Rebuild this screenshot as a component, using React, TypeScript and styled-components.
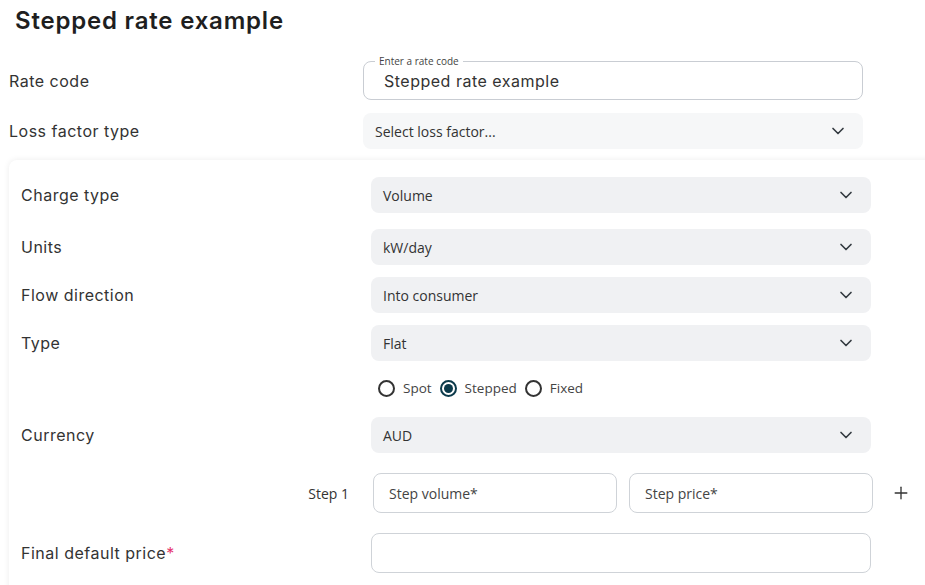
import React from 'react';
import styled, { createGlobalStyle } from 'styled-components';
import { ChevronDown, Plus } from 'lucide-react';

const GlobalStyle = createGlobalStyle`
  html, body {
    margin: 0;
    padding: 0;
    background: #ffffff;
    overflow: hidden;
  }
  body {
    font-family: Inter, 'Liberation Sans', sans-serif;
    color: #2b2b2b;
  }
  * {
    box-sizing: border-box;
  }
`;

const Page = styled.div`
  padding: 6px 0 0 9px;
  width: 925px;
`;

const Heading = styled.h2`
  margin: 0 0 0 6px;
  font-size: 24px;
  line-height: 30px;
  font-weight: 600;
  color: #1f1f1f;
  letter-spacing: 0.8px;
`;

const Row = styled.div<{ $mt?: number; $labelWidth?: number }>`
  display: grid;
  grid-template-columns: ${(p) => p.$labelWidth ?? 354}px 500px;
  align-items: center;
  margin-top: ${(p) => p.$mt ?? 0}px;
`;

const Label = styled.div`
  font-size: 16px;
  line-height: 24px;
  color: #333;
  letter-spacing: 0.5px;
`;

const Required = styled.span`
  color: #e5336d;
`;

const Outlined = styled.div`
  position: relative;
  height: 39px;
  border: 1px solid #c9cdd3;
  border-radius: 8px;
  display: flex;
  align-items: center;
  padding: 0 20px;
`;

const FloatLabel = styled.span`
  position: absolute;
  top: -7px;
  left: 11px;
  padding: 0 4px;
  background: #ffffff;
  font-family: 'Open Sans', sans-serif;
  font-size: 10px;
  line-height: 12px;
  color: #444;
`;

const Value = styled.span`
  font-size: 16px;
  color: #333;
  letter-spacing: 0.5px;
`;

const Select = styled.div<{ $light?: boolean }>`
  height: 36px;
  border-radius: 8px;
  background: ${(p) => (p.$light ? '#f6f7f8' : '#f0f1f3')};
  display: flex;
  align-items: center;
  justify-content: space-between;
  padding: 0 15px 0 12px;
  font-family: 'Open Sans', sans-serif;
  font-size: 14px;
  color: #333;
  svg {
    color: #333a40;
  }
`;

const Card = styled.div`
  margin-top: 11px;
  margin-right: -30px;
  padding: 17px 12px 20px 12px;
  border-radius: 8px 0 0 0;
  background: #ffffff;
  box-shadow: 0 0 6px rgba(0, 0, 0, 0.08);
`;

const RadioGroup = styled.div`
  display: flex;
  align-items: center;
  gap: 8px;
  padding-left: 7px;
  height: 24px;
`;

const RadioCircle = styled.span<{ $checked?: boolean }>`
  width: 17px;
  height: 17px;
  border-radius: 50%;
  border: 2px solid ${(p) => (p.$checked ? '#0c3a4b' : '#333')};
  display: inline-flex;
  align-items: center;
  justify-content: center;
  &::after {
    content: '';
    width: 9px;
    height: 9px;
    border-radius: 50%;
    background: ${(p) => (p.$checked ? '#0c3a4b' : 'transparent')};
  }
`;

const RadioText = styled.span`
  font-family: 'Open Sans', sans-serif;
  font-size: 13.5px;
  color: #444;
`;

const StepRow = styled.div`
  display: grid;
  grid-template-columns: 352px 244px 244px 40px;
  column-gap: 12px;
  align-items: center;
  margin-top: 20px;
  margin-left: -12px;
`;

const StepLabel = styled.div`
  text-align: right;
  padding-right: 12px;
  font-family: 'Open Sans', sans-serif;
  font-size: 14px;
  color: #333;
`;

const TextBox = styled.div`
  height: 40px;
  border: 1px solid #cfd3d8;
  border-radius: 8px;
  display: flex;
  align-items: center;
  padding: 0 15px;
  font-family: 'Open Sans', sans-serif;
  font-size: 14px;
  color: #444;
  background: #fff;
`;

const AddButton = styled.div`
  display: flex;
  align-items: center;
  padding-left: 6px;
  color: #333;
`;

const options = ['Spot', 'Stepped', 'Fixed'];

export default function App() {
  return (
    <Page>
      <GlobalStyle />
      <Heading>Stepped rate example</Heading>

      <Row $mt={25}>
        <Label>Rate code</Label>
        <Outlined>
          <FloatLabel>Enter a rate code</FloatLabel>
          <Value>Stepped rate example</Value>
        </Outlined>
      </Row>

      <Row $mt={13}>
        <Label>Loss factor type</Label>
        <Select $light>
          <span>Select loss factor...</span>
          <ChevronDown size={20} strokeWidth={2} />
        </Select>
      </Row>

      <Card>
        <Row $labelWidth={350}>
          <Label>Charge type</Label>
          <Select>
            <span>Volume</span>
            <ChevronDown size={20} strokeWidth={2} />
          </Select>
        </Row>
        <Row $labelWidth={350} $mt={16}>
          <Label>Units</Label>
          <Select>
            <span>kW/day</span>
            <ChevronDown size={20} strokeWidth={2} />
          </Select>
        </Row>
        <Row $labelWidth={350} $mt={12}>
          <Label>Flow direction</Label>
          <Select>
            <span>Into consumer</span>
            <ChevronDown size={20} strokeWidth={2} />
          </Select>
        </Row>
        <Row $labelWidth={350} $mt={12}>
          <Label>Type</Label>
          <Select>
            <span>Flat</span>
            <ChevronDown size={20} strokeWidth={2} />
          </Select>
        </Row>
        <Row $labelWidth={350} $mt={15}>
          <span />
          <RadioGroup>
            {options.map((o) => (
              <React.Fragment key={o}>
                <RadioCircle $checked={o === 'Stepped'} />
                <RadioText>{o}</RadioText>
              </React.Fragment>
            ))}
          </RadioGroup>
        </Row>
        <Row $labelWidth={350} $mt={17}>
          <Label>Currency</Label>
          <Select>
            <span>AUD</span>
            <ChevronDown size={20} strokeWidth={2} />
          </Select>
        </Row>
        <StepRow>
          <StepLabel>Step 1</StepLabel>
          <TextBox>Step volume*</TextBox>
          <TextBox>Step price*</TextBox>
          <AddButton>
            <Plus size={20} strokeWidth={1.6} />
          </AddButton>
        </StepRow>
        <Row $labelWidth={350} $mt={20}>
          <Label>
            Final default price<Required>*</Required>
          </Label>
          <TextBox />
        </Row>
      </Card>
    </Page>
  );
}
